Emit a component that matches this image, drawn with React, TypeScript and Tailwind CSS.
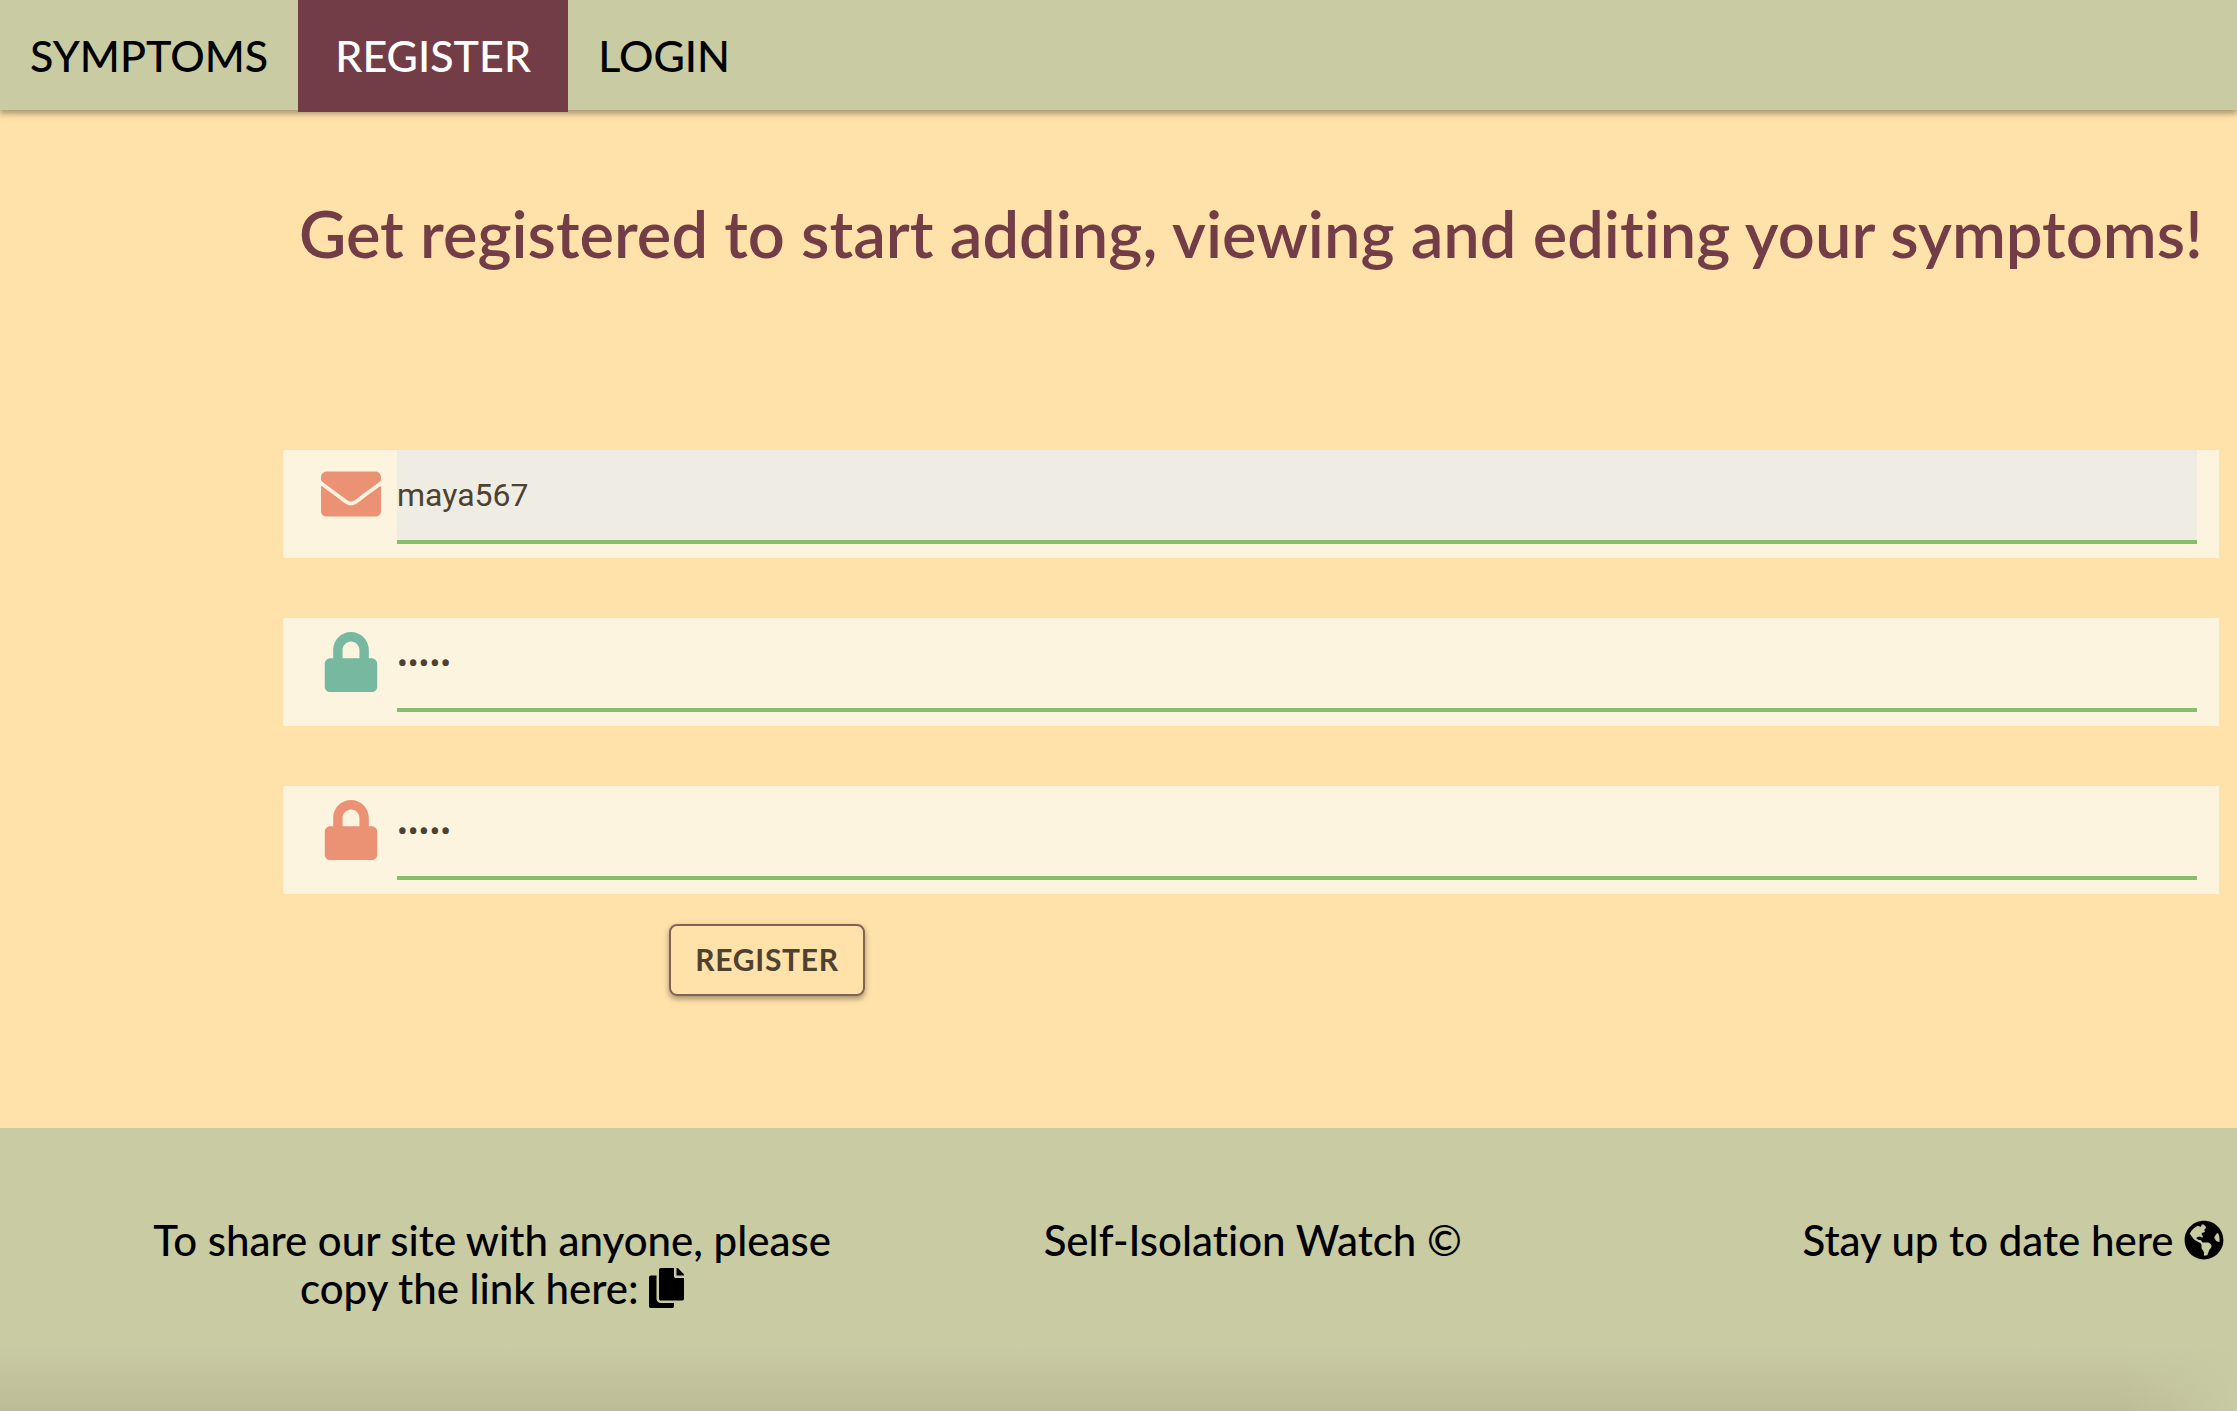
import type { ReactNode } from "react";
import type { IconType } from "react-icons";
import { FaCopy, FaEnvelope, FaGlobeAmericas, FaLock } from "react-icons/fa";

function NavLink({ href, active = false, children }: { href: string; active?: boolean; children: ReactNode }) {
  return (
    <a
      href={href}
      aria-current={active ? "page" : undefined}
      className={
        active
          ? "flex h-28 min-w-[270px] items-center justify-center bg-[#723d46] px-[30px] text-white"
          : "flex h-28 items-center px-[30px] text-black"
      }
    >
      {children}
    </a>
  );
}

type FieldProps = {
  id: string;
  label: string;
  type: string;
  value: string;
  icon: IconType;
  iconClass: string;
  inputClass: string;
};

function Field({ id, label, type, value, icon: Icon, iconClass, inputClass }: FieldProps) {
  return (
    <div className="flex h-27 items-start bg-[#fdf4e0] pr-[22px] pl-[38px]">
      <label htmlFor={id} className="mr-4 flex shrink-0 pt-[14px]">
        <Icon className={iconClass} aria-hidden="true" />
      </label>
      <input id={id} aria-label={label} type={type} defaultValue={value} className={inputClass} />
    </div>
  );
}

const INPUT =
  "h-[94px] min-w-0 flex-1 border-b-4 border-[#86be70] font-[Roboto,sans-serif] text-[32px] text-[#4d4130] outline-none";

const ICON = "size-[60px] shrink-0";

export default function App() {
  return (
    <div className="flex min-h-screen flex-col overflow-hidden bg-[#ffe1aa] font-[Lato,sans-serif] [font-variant-ligatures:none]">
      <nav className="flex h-[110px] bg-[#c9cba3] text-[43px] font-medium shadow-[0_4px_4px_0_rgba(0,0,0,0.2),0_2px_10px_0_rgba(0,0,0,0.18)]">
        <NavLink href="#symptoms">SYMPTOMS</NavLink>
        <NavLink href="#register" active>
          REGISTER
        </NavLink>
        <NavLink href="#login">LOGIN</NavLink>
      </nav>

      <main className="flex-1 pr-[18px] pl-[283px]">
        <h1 className="pt-21 text-center text-[65px] leading-[78px] font-semibold whitespace-nowrap text-[#723d46]">
          Get registered to start adding, viewing and editing your symptoms!
        </h1>
        <form className="pt-[178px]" onSubmit={(e) => e.preventDefault()}>
          <div className="flex flex-col gap-15">
            <Field
              id="username"
              label="Username"
              type="text"
              value="maya567"
              icon={FaEnvelope}
              iconClass={`${ICON} text-[#ec9274]`}
              inputClass={`${INPUT} bg-[#efece4]`}
            />
            <Field
              id="password"
              label="Password"
              type="password"
              value="maya5"
              icon={FaLock}
              iconClass={`${ICON} text-[#77b8a0]`}
              inputClass={`${INPUT} bg-transparent`}
            />
            <Field
              id="confirm"
              label="Confirm password"
              type="password"
              value="maya5"
              icon={FaLock}
              iconClass={`${ICON} text-[#ec9274]`}
              inputClass={`${INPUT} bg-transparent`}
            />
          </div>
          <button
            type="submit"
            className="mt-[30px] ml-[386px] flex h-18 w-[196px] items-center justify-center rounded-lg border-2 border-[#836256] pb-0.5 text-[30px] font-bold tracking-wide text-[#4d4130] shadow-[0_3px_5px_0_rgba(0,0,0,0.28),0_2px_10px_0_rgba(0,0,0,0.1)]"
          >
            REGISTER
          </button>
        </form>
      </main>

      <footer className="relative h-[283px] overflow-hidden bg-[#c9cba3] pt-[88px]">
        <div className="ml-[5%] grid w-[102%] grid-cols-3 text-center text-[42px] leading-[48px] font-medium text-black">
          <p>
            To share our site with anyone, please
            <br />
            copy the link here:{" "}
            <a href="#copy" aria-label="Copy link" className="inline-block align-[-4px]">
              <FaCopy className="h-10 w-[35px]" />
            </a>
          </p>
          <p>Self-Isolation Watch ©</p>
          <p>
            Stay up to date here{" "}
            <a href="#news" aria-label="Latest news" className="inline-block align-[-4px]">
              <FaGlobeAmericas className="size-10" />
            </a>
          </p>
        </div>
        <div className="pointer-events-none absolute inset-x-0 bottom-0 h-16 bg-linear-to-b from-transparent to-[#bcbc97] mask-r-from-95%" />
      </footer>
    </div>
  );
}
